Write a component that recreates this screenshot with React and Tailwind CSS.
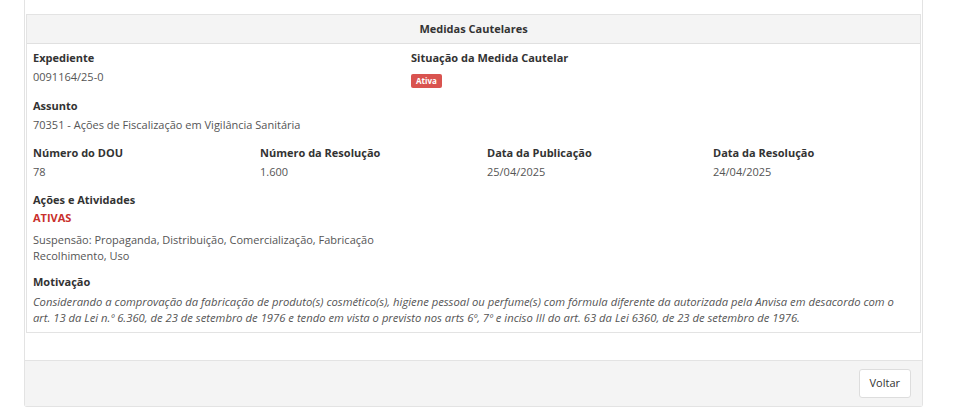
export default function App() {
  const label = "text-[11px] leading-[16px] font-bold text-[#333]";
  const value = "text-[11px] leading-[16px] text-[#555]";
  return (
    <div className="w-[966px] h-[413px] bg-white overflow-hidden" style={{ fontFamily: '"Open Sans", sans-serif' }}>
      <div className="ml-[24px] w-[899px] border-x border-b border-[#e3e3e3] rounded-b-[3px] bg-white">
        <div className="pt-[14px] px-[1px]">
          <div className="border border-[#e3e3e3]">
            <div className="h-[29px] bg-[#f4f4f4] border-b border-[#e0e0e0] flex items-center justify-center text-[11px] font-bold text-[#333]">
              Medidas Cautelares
            </div>
            <div className="pl-[6px] pr-[6px] pt-[6px] pb-[6px]">
              <div className="flex">
                <div className="w-[378px]">
                  <div className={label}>Expediente</div>
                  <div className={value + " mt-[3px]"}>0091164/25-0</div>
                </div>
                <div>
                  <div className={label}>Situação da Medida Cautelar</div>
                  <div className="mt-[5px] inline-block bg-[#d9534f] text-white text-[8px] font-bold leading-[14px] px-[5px] rounded-[2px]">Ativa</div>
                </div>
              </div>
              <div className="mt-[8px]">
                <div className={label}>Assunto</div>
                <div className={value + " mt-[3px]"}>70351 - Ações de Fiscalização em Vigilância Sanitária</div>
              </div>
              <div className="mt-[12px] grid grid-cols-[227px_227px_226px_1fr]">
                <div>
                  <div className={label}>Número do DOU</div>
                  <div className={value + " mt-[3px]"}>78</div>
                </div>
                <div>
                  <div className={label}>Número da Resolução</div>
                  <div className={value + " mt-[3px]"}>1.600</div>
                </div>
                <div>
                  <div className={label}>Data da Publicação</div>
                  <div className={value + " mt-[3px]"}>25/04/2025</div>
                </div>
                <div>
                  <div className={label}>Data da Resolução</div>
                  <div className={value + " mt-[3px]"}>24/04/2025</div>
                </div>
              </div>
              <div className="mt-[12px]">
                <div className={label}>Ações e Atividades</div>
                <div className="text-[11px] leading-[16px] font-bold text-[#c9302c] mt-[2px]">ATIVAS</div>
                <div className={value + " mt-[6px]"}>
                  Suspensão: Propaganda, Distribuição, Comercialização, Fabricação
                  <br />
                  Recolhimento, Uso
                </div>
              </div>
              <div className="mt-[10px]">
                <div className={label}>Motivação</div>
                <div className="text-[11.25px] leading-[16px] text-[#555] italic mt-[4px] pr-[14px]">
                  Considerando a comprovação da fabricação de produto(s) cosmético(s), higiene pessoal ou perfume(s) com fórmula diferente da autorizada pela Anvisa em desacordo com o art. 13 da Lei n.º 6.360, de 23 de setembro de 1976 e tendo em vista o previsto nos arts 6º, 7º e inciso III do art. 63 da Lei 6360, de 23 de setembro de 1976.
                </div>
              </div>
            </div>
          </div>
        </div>
        <div className="h-[27px]" />
        <div className="h-[46px] bg-[#f4f4f4] border-t border-[#e3e3e3] flex items-center justify-end pr-[11px]">
          <button className="h-[29px] px-[10px] bg-white border border-[#ddd] rounded-[3px] text-[11px] text-[#333]">Voltar</button>
        </div>
      </div>
    </div>
  );
}
